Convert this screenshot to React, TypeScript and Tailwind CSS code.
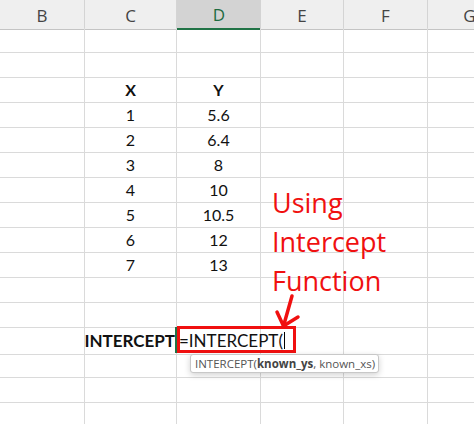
const cols = ["B", "C", "D", "E", "F", "G"];

type Cell = { text: string; bold?: boolean };

const rows: Record<number, Cell[]> = {
  3: [{ text: "X", bold: true }, { text: "Y", bold: true }],
  4: [{ text: "1" }, { text: "5.6" }],
  5: [{ text: "2" }, { text: "6.4" }],
  6: [{ text: "3" }, { text: "8" }],
  7: [{ text: "4" }, { text: "10" }],
  8: [{ text: "5" }, { text: "10.5" }],
  9: [{ text: "6" }, { text: "12" }],
  10: [{ text: "7" }, { text: "13" }],
};

const rowCount = 16;

function HeaderRow() {
  return (
    <div className="grid grid-cols-[85px_92px_84px_83px_84px_84px] h-[28px]">
      {cols.map((c) =>
        c === "D" ? (
          <div
            key={c}
            className="flex items-center justify-center bg-[#d3d3d3] border-b-2 border-b-[#217346] text-[#1e6b41] text-[17px] pt-[2px]"
          >
            {c}
          </div>
        ) : (
          <div
            key={c}
            className="flex items-center justify-center bg-[#efefef] border-r border-r-[#d4d4d4] border-b border-b-[#c4c4c4] text-[#444] text-[17px] pt-[2px]"
          >
            {c}
          </div>
        ),
      )}
    </div>
  );
}

function GridRow({ index }: { index: number }) {
  const data = rows[index];
  const isFormulaRow = index === 13;

  return (
    <div className="grid grid-cols-[85px_92px_84px_83px_84px_84px] h-[25px]">
      {cols.map((c, i) => {
        let content: React.ReactNode = null;
        let align = "justify-center";
        if (data && (c === "C" || c === "D")) {
          const cell = data[i - 1];
          content = <span className={cell.bold ? "font-bold" : ""}>{cell.text}</span>;
        }
        if (isFormulaRow && c === "C") {
          align = "justify-end pr-[1px]";
          content = <span className="font-bold text-[17px]">INTERCEPT</span>;
        }
        if (isFormulaRow && c === "D") {
          align = "justify-start pl-[2px]";
          content = (
            <span className="flex items-center whitespace-nowrap text-[17px]">
              =INTERCEPT(
              <span className="inline-block w-px h-[17px] bg-black ml-[1px]" />
            </span>
          );
        }
        return (
          <div
            key={c}
            className={`flex items-center overflow-visible whitespace-nowrap border-r border-b border-[#dadada] text-[16px] text-[#111] ${align}`}
          >
            {content}
          </div>
        );
      })}
    </div>
  );
}

export default function App() {
  return (
    <div className="relative w-[474px] h-[424px] overflow-hidden bg-white font-['Lato',sans-serif]">
      <div className="font-['Open_Sans',sans-serif]">
        <HeaderRow />
      </div>
      {Array.from({ length: rowCount }, (_, k) => (
        <GridRow key={k} index={k + 1} />
      ))}

      {/* active cell edge */}
      <div className="absolute left-[175px] top-[327px] w-[2px] h-[26px] bg-[#217346]" />

      {/* red highlight box */}
      <div className="absolute left-[177px] top-[326px] w-[119px] h-[27px] border-[3px] border-[#f01010]" />

      {/* annotation */}
      <div className="absolute left-[272px] top-[183px] font-['Open_Sans',sans-serif] text-[27px] leading-[39px] text-[#f01010]">
        <div>Using</div>
        <div>Intercept</div>
        <div>Function</div>
      </div>

      <svg className="absolute left-0 top-0" width="474" height="424" viewBox="0 0 474 424" fill="none">
        <path d="M292 296 L283.5 326" stroke="#f01010" strokeWidth="3.5" strokeLinecap="round" />
        <path d="M277 312 L283.5 326 L298 317" stroke="#f01010" strokeWidth="3.5" strokeLinecap="round" strokeLinejoin="round" />
      </svg>

      {/* function tooltip */}
      <div className="absolute left-[190px] top-[354px] w-[189px] h-[19px] flex items-center pl-[4px] bg-white border border-[#c8c8c8] rounded-[3px] shadow-[0_2px_6px_rgba(0,0,0,0.18)] font-['Open_Sans',sans-serif] text-[11.5px] text-[#555] whitespace-nowrap">
        INTERCEPT(<span className="font-bold text-[#444]">known_ys</span>, known_xs)
      </div>
    </div>
  );
}
